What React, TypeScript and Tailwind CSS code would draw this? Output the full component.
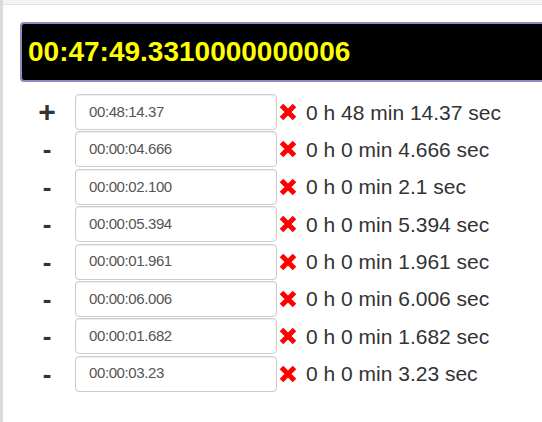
import React from "react";

const rows = [
  { sign: "+", value: "00:48:14.37", text: "0 h 48 min 14.37 sec" },
  { sign: "-", value: "00:00:04.666", text: "0 h 0 min 4.666 sec" },
  { sign: "-", value: "00:00:02.100", text: "0 h 0 min 2.1 sec" },
  { sign: "-", value: "00:00:05.394", text: "0 h 0 min 5.394 sec" },
  { sign: "-", value: "00:00:01.961", text: "0 h 0 min 1.961 sec" },
  { sign: "-", value: "00:00:06.006", text: "0 h 0 min 6.006 sec" },
  { sign: "-", value: "00:00:01.682", text: "0 h 0 min 1.682 sec" },
  { sign: "-", value: "00:00:03.23", text: "0 h 0 min 3.23 sec" },
];

function RedX() {
  return (
    <svg width="18" height="18" viewBox="0 0 18 18" className="shrink-0">
      <path d="M2.5 2.5 L15.5 15.5 M15.5 2.5 L2.5 15.5" stroke="#ff0000" strokeWidth="5" strokeLinecap="butt" />
    </svg>
  );
}

export default function App() {
  return (
    <div className="w-[542px] h-[422px] bg-white flex overflow-hidden font-['Liberation_Sans',Arial,sans-serif]">
      <div className="w-[3px] h-full bg-[#dadada] shrink-0" />
      <div className="flex-1 flex flex-col">
        <div className="h-[5px] bg-[#f4f4f4] border-b border-[#e2e2e2] shrink-0" />
        <div className="pl-[17px] pt-[17px]">
          <div className="h-[60px] bg-black border-2 border-r-0 border-[#8b8bbd] rounded-l-[4px] flex items-center pl-[6px]">
            <span className="text-[28px] font-bold text-[#ffff00] leading-none">00:47:49.3310000000006</span>
          </div>
        </div>
        <div className="flex flex-col pt-[12px] gap-[1.4px]">
          {rows.map((r, i) => (
            <div key={i} className="flex items-center h-[36px]">
              <div className="ml-[34px] w-[20px] flex justify-center">
                {r.sign === "+" ? (
                  <span className="text-[30px] font-bold text-[#333] leading-none">+</span>
                ) : (
                  <span className="text-[26px] font-bold text-[#333] leading-none">-</span>
                )}
              </div>
              <div className="ml-[18px] w-[202px] h-[36px] border border-[#cccccc] rounded-[4px] flex items-center pl-[13px] shadow-[inset_0_1px_1px_rgba(0,0,0,0.075)]">
                <span className="text-[15px] tracking-[-0.4px] text-[#555]">{r.value}</span>
              </div>
              <div className="ml-[2px]">
                <RedX />
              </div>
              <span className="ml-[9px] text-[21px] text-[#333] whitespace-nowrap leading-none">{r.text}</span>
            </div>
          ))}
        </div>
      </div>
    </div>
  );
}
